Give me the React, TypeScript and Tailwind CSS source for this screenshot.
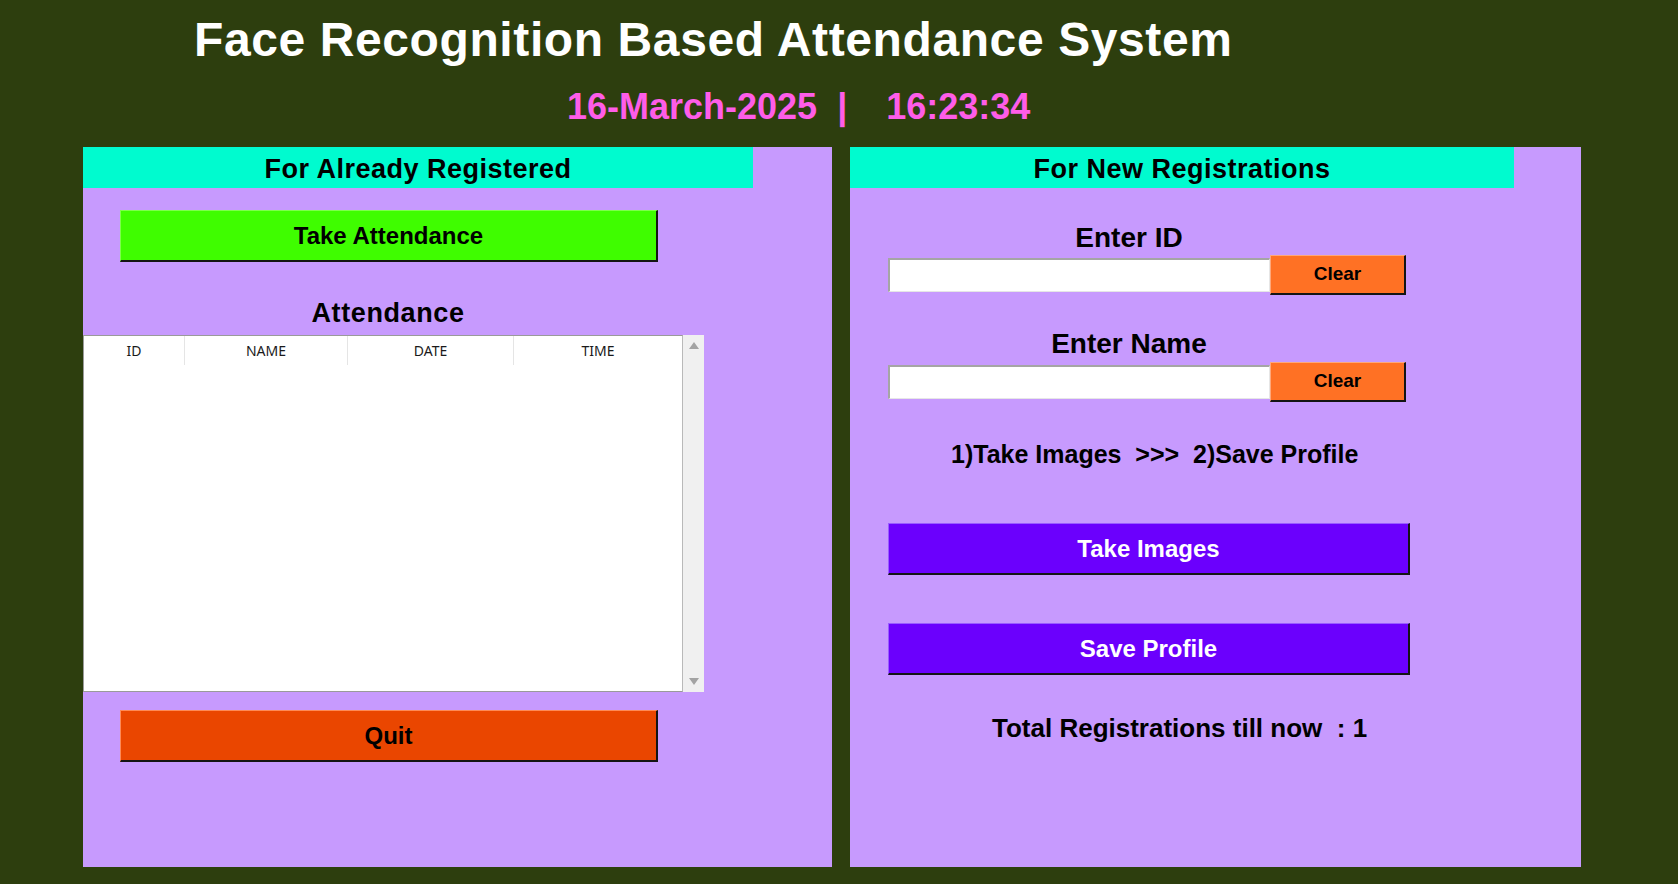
import React from "react";

const sans = { fontFamily: '"Liberation Sans", Arial, sans-serif' } as const;

function RaisedButton({
  label,
  className,
  text,
}: {
  label: string;
  className: string;
  text: string;
}) {
  return (
    <div
      className={`flex items-center justify-center font-bold border-r-2 border-b-2 border-r-[#141414] border-b-[#141414] border-t border-l ${className} ${text}`}
    >
      {label}
    </div>
  );
}

function Triangle({ up }: { up: boolean }) {
  return (
    <svg width="10" height="7" viewBox="0 0 10 7">
      {up ? (
        <polygon points="5,0 10,7 0,7" fill="#a3a3a3" />
      ) : (
        <polygon points="0,0 10,0 5,7" fill="#a3a3a3" />
      )}
    </svg>
  );
}

export default function App() {
  return (
    <div
      className="w-[1678px] h-[884px] bg-[#2d3e0e] overflow-hidden"
      style={sans}
    >
      {/* Title */}
      <div className="pt-[12px] pl-[194px] h-[66px]">
        <div className="h-[54px] leading-[56px] text-[48px] font-bold text-white tracking-[0.6px] whitespace-nowrap">
          Face Recognition Based Attendance System
        </div>
      </div>

      {/* Date / clock */}
      <div className="mt-[18px] h-[44px] flex pl-[567px] pt-[2px] text-[36px] leading-[42px] font-bold text-[#fe5de8] whitespace-nowrap">
        <span>16-March-2025</span>
        <span className="ml-[20px]">|</span>
        <span className="ml-[39px]">16:23:34</span>
      </div>

      {/* Panels */}
      <div className="mt-[19px] flex pl-[83px] gap-[18px]">
        {/* Left panel */}
        <div className="w-[749px] h-[720px] bg-[#c79afe] flex flex-col">
          <div className="w-[670px] h-[41px] pt-[3px] bg-[#00fbcf] text-center text-[27px] leading-[38px] font-bold text-black tracking-[0.5px]">
            For Already Registered
          </div>
          <div className="ml-[37px] mt-[22px]">
            <RaisedButton
              label="Take Attendance"
              className="w-[538px] h-[52px] bg-[#3ffd00] border-t-[#7dff4a] border-l-[#7dff4a]"
              text="text-[24px] text-black"
            />
          </div>
          <div className="ml-[37px] w-[536px] mt-[35px] h-[31px] text-center text-[27px] leading-[32px] font-bold text-black tracking-[0.6px]">
            Attendance
          </div>
          <div className="mt-[7px] w-[621px] h-[357px] flex">
            <div className="w-[600px] h-full bg-white border-t border-l border-b border-[#9a9a9a] border-r border-r-[#b9b9b9] flex flex-col">
              <div
                className="h-[29px] flex text-[14px] text-[#1a1a1a]"
                style={{ fontFamily: '"Noto Sans", "Open Sans", sans-serif' }}
              >
                <div className="w-[101px] flex items-center justify-center border-r border-[#e5e5e5]">
                  ID
                </div>
                <div className="w-[163px] flex items-center justify-center border-r border-[#e5e5e5]">
                  NAME
                </div>
                <div className="w-[166px] flex items-center justify-center border-r border-[#e5e5e5]">
                  DATE
                </div>
                <div className="flex-1 flex items-center justify-center">
                  TIME
                </div>
              </div>
            </div>
            <div className="w-[21px] h-full bg-[#f0f0f0] flex flex-col items-center justify-between py-[7px]">
              <Triangle up />
              <Triangle up={false} />
            </div>
          </div>
          <div className="ml-[37px] mt-[18px]">
            <RaisedButton
              label="Quit"
              className="w-[538px] h-[52px] bg-[#ea4600] border-t-[#ff8a55] border-l-[#ff8a55]"
              text="text-[24px] text-black"
            />
          </div>
        </div>

        {/* Right panel */}
        <div className="w-[731px] h-[720px] bg-[#c79afe] flex flex-col">
          <div className="w-[664px] h-[41px] pt-[3px] bg-[#00fbcf] text-center text-[27px] leading-[38px] font-bold text-black tracking-[0.5px]">
            For New Registrations
          </div>
          <div className="ml-[38px] w-[482px] mt-[34px] h-[31px] text-center text-[28px] leading-[32px] font-bold text-black">
            Enter ID
          </div>
          <div className="ml-[38px] mt-[2px] flex items-center h-[40px]">
            <div className="w-[382px] h-[34px] bg-white border-t-2 border-l-2 border-[#a5a5a5] border-b border-r border-b-[#e6e6e6] border-r-[#e6e6e6]" />
            <RaisedButton
              label="Clear"
              className="w-[136px] h-[40px] bg-[#ff7124] border-t-[#ffa87a] border-l-[#ffa87a]"
              text="text-[19px] text-black"
            />
          </div>
          <div className="ml-[38px] w-[482px] mt-[33px] h-[31px] text-center text-[28px] leading-[32px] font-bold text-black">
            Enter Name
          </div>
          <div className="ml-[38px] mt-[3px] flex items-center h-[40px]">
            <div className="w-[382px] h-[34px] bg-white border-t-2 border-l-2 border-[#a5a5a5] border-b border-r border-b-[#e6e6e6] border-r-[#e6e6e6]" />
            <RaisedButton
              label="Clear"
              className="w-[136px] h-[40px] bg-[#ff7124] border-t-[#ffa87a] border-l-[#ffa87a]"
              text="text-[19px] text-black"
            />
          </div>
          <div className="pl-[101px] mt-[37px] h-[30px] text-[25px] leading-[30px] font-bold text-black whitespace-pre">
            {"1)Take Images  >>>  2)Save Profile"}
          </div>
          <div className="ml-[38px] mt-[54px]">
            <RaisedButton
              label="Take Images"
              className="w-[522px] h-[52px] bg-[#6b00fd] border-t-[#9a5cff] border-l-[#9a5cff]"
              text="text-[24px] text-white"
            />
          </div>
          <div className="ml-[38px] mt-[48px]">
            <RaisedButton
              label="Save Profile"
              className="w-[522px] h-[52px] bg-[#6b00fd] border-t-[#9a5cff] border-l-[#9a5cff]"
              text="text-[24px] text-white"
            />
          </div>
          <div className="pl-[142px] mt-[38px] h-[30px] text-[26px] leading-[30px] font-bold text-black whitespace-pre">
            {"Total Registrations till now  : 1"}
          </div>
        </div>
      </div>
    </div>
  );
}
